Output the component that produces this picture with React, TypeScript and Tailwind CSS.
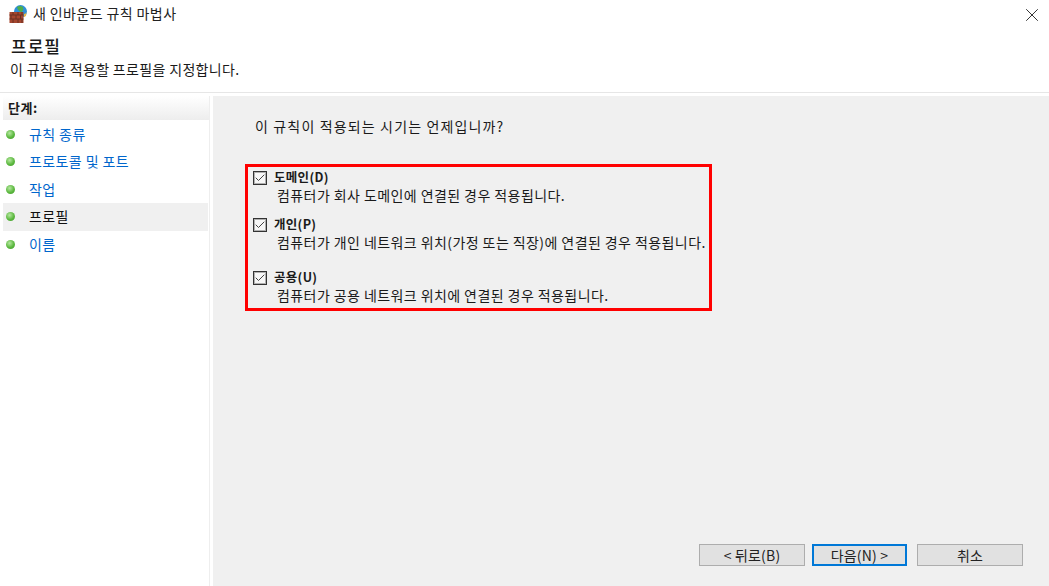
import { Check, X } from 'lucide-react';

const FONT = "font-['Noto_Sans_CJK_KR','Liberation_Sans',sans-serif]";

const STEPS = [
  { label: '규칙 종류', active: false },
  { label: '프로토콜 및 포트', active: false },
  { label: '작업', active: false },
  { label: '프로필', active: true },
  { label: '이름', active: false },
];

const PROFILES = [
  { title: '도메인(D)', desc: '컴퓨터가 회사 도메인에 연결된 경우 적용됩니다.', cls: 'h-[47px]' },
  { title: '개인(P)', desc: '컴퓨터가 개인 네트워크 위치(가정 또는 직장)에 연결된 경우 적용됩니다.', cls: 'h-[54px]' },
  { title: '공용(U)', desc: '컴퓨터가 공용 네트워크 위치에 연결된 경우 적용됩니다.', cls: 'h-[40px]' },
];

function WizardIcon() {
  return (
    <svg width="18" height="18" viewBox="0 0 18 18" className="shrink-0">
      <circle cx="11.500" cy="6.500" r="6.500" fill="#2f8fd8" />
      <path d="M8 2 Q11 0 14 2 Q15 5 12.500 7 Q9.500 7 8 2Z" fill="#4fae4a" />
      <path d="M15 9 Q17 9 17.500 7 L17 11 L15 12Z" fill="#e8b84a" />
      <rect x="0.500" y="7" width="14" height="11" fill="#a5462f" />
      <path d="M0.500 10h14M0.500 14h14M4 7v3M9 7v3M13 7v3M2 10v4M7 10v4M11.500 10v4M4 14v4M9 14v4M13 14v4" stroke="#6b3022" strokeWidth="1" fill="none" />
    </svg>
  );
}

function Bullet() {
  return <span className="w-[9px] h-[9px] rounded-full shrink-0 bg-[radial-gradient(circle_at_40%_35%,#b5e8a0,#5cb83f_55%,#3f9a2c)]" />;
}

function WizButton({ label, primary, cls }: { label: string; primary?: boolean; cls: string }) {
  return (
    <button
      type="button"
      className={`h-[22px] flex items-center justify-center bg-[#e1e1e1] text-[14px] tracking-[0.2px] text-[#222] ${cls} ${
        primary ? 'border-2 border-[#0078d7]' : 'border border-[#adadad]'
      }`}
    >
      {label}
    </button>
  );
}

export default function App() {
  return (
    <div className={`${FONT} w-[1049px] h-[586px] bg-white flex flex-col overflow-hidden text-[14px] text-[#1a1a1a]`}>
      <div className="h-[30px] flex items-center justify-between pl-[9px] pr-[6px] shrink-0">
        <div className="flex items-center gap-[6px] -mt-[3px]">
          <WizardIcon />
          <span className="text-[14px] tracking-[0.4px] text-[#222]">새 인바운드 규칙 마법사</span>
        </div>
        <X size={22} strokeWidth={1} className="text-[#222]" />
      </div>
      <div className="h-[63px] pl-[11px] shrink-0 flex flex-col border-b border-[#e6e6e6]">
        <div className="text-[17px] font-medium leading-[22px] mt-[5px] tracking-[1px]">프로필</div>
        <div className="text-[14px] leading-[18px] mt-[3px] -ml-[1px] tracking-[0.33px]">이 규칙을 적용할 프로필을 지정합니다.</div>
      </div>
      <div className="flex-1 flex pt-[3px] min-h-0">
        <div className="w-[210px] pl-[3px] shrink-0 flex flex-col">
          <div className="h-[24px] border-r border-[#eeeeee] bg-[linear-gradient(#ffffff,#ededed)] pl-[5px] flex items-center text-[13px] font-bold tracking-[0.5px]">
            단계:
          </div>
          <div className="flex-1 border-r border-[#eeeeee] pt-[0.500px]">
            {STEPS.map((s) => (
              <div
                key={s.label}
                className={`h-[27.500px] flex items-center gap-[14px] pl-[3px] mr-[1px] ${s.active ? 'bg-[#f0f0f0] text-[#111]' : 'text-[#0066cc]'}`}
              >
                <Bullet />
                <span className="text-[14px] tracking-[0.4px]">{s.label}</span>
              </div>
            ))}
          </div>
        </div>
        <div className="w-[3px] shrink-0" />
        <div className="flex-1 bg-[#f0f0f0] flex flex-col pl-[32px] pr-[26px] pb-[20px]">
          <div className="mt-[20px] h-[20px] pl-[10px] flex items-center text-[14px] tracking-[1.15px]">이 규칙이 적용되는 시기는 언제입니까?</div>
          <div className="mt-[28px] w-[467px] h-[147px] border-[3px] border-[#ff0000] pl-[5px] pr-[2px] pt-[1px] flex flex-col">
            {PROFILES.map((p) => (
              <div key={p.title} className={`${p.cls} flex gap-[6px] pt-[1px]`}>
                <span className="w-[14px] h-[14px] mt-[2px] border border-[#333] shadow-[inset_0_0_0_1px_#b0b0b0] bg-[#f7f7f7] flex items-center justify-center shrink-0">
                  <Check size={14} strokeWidth={2} className="text-[#444]" />
                </span>
                <div className="flex flex-col whitespace-nowrap">
                  <span className="text-[12.500px] font-bold leading-[16px] pl-[1px] tracking-[0.3px]">{p.title}</span>
                  <span className="text-[14px] leading-[20px] pl-[4px] tracking-[0.42px]">{p.desc}</span>
                </div>
              </div>
            ))}
          </div>
          <div className="mt-auto flex justify-end items-center">
            <WizButton label="< 뒤로(B)" cls="w-[106px]" />
            <WizButton label="다음(N) >" primary cls="w-[95px] ml-[7px]" />
            <WizButton label="취소" cls="w-[106px] ml-[10px]" />
          </div>
        </div>
      </div>
    </div>
  );
}
